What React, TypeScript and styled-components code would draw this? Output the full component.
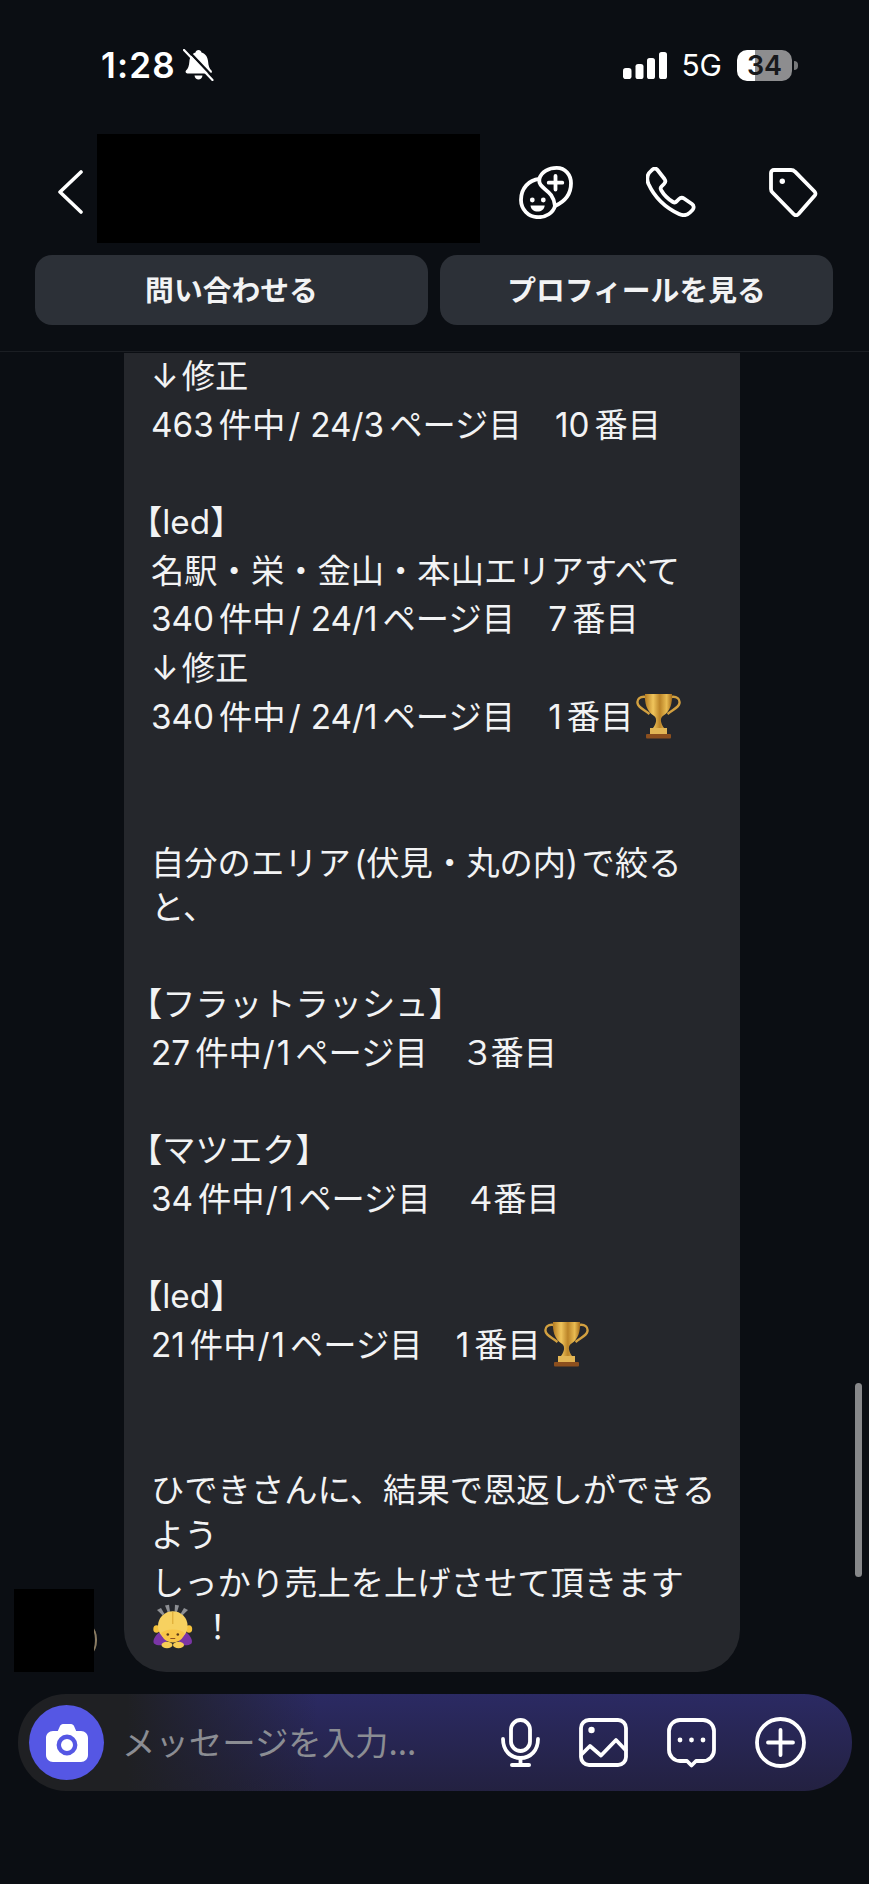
import React from "react";
import styled, { createGlobalStyle } from "styled-components";

const Global = createGlobalStyle`
  html, body { margin: 0; padding: 0; background: #0b0e13; }
  * { box-sizing: border-box; }
`;

const Page = styled.div`
  position: relative;
  width: 869px;
  height: 1884px;
  overflow: hidden;
  background: #0b0e13;
  color: #f2f3f4;
  font-family: Inter, "Noto Sans CJK JP", sans-serif;
`;

const StatusBar = styled.div`
  height: 134px;
  padding: 49px 72px 0 101px;
  display: flex;
  justify-content: space-between;
  align-items: flex-start;
`;
const StatusLeft = styled.div`
  display: flex;
  align-items: center;
  gap: 7px;
  height: 32px;
`;
const Time = styled.span`
  font-size: 35px;
  font-weight: 600;
  letter-spacing: 1.2px;
  line-height: 32px;
  color: #fff;
`;
const StatusRight = styled.div`
  display: flex;
  align-items: center;
  gap: 15px;
  height: 32px;
`;
const Network = styled.span`
  font-size: 30px;
  line-height: 32px;
  color: #fff;
  margin-left: -1px;
`;
const Battery = styled.div`
  position: relative;
  width: 55px;
  height: 31px;
  margin-right: 5px;
  border-radius: 10px;
  background: linear-gradient(90deg, #fff 0 18px, #8d8d8f 18px);
  color: #17181b;
  font-size: 27px;
  font-weight: 600;
  line-height: 31px;
  text-align: center;
  &::after {
    content: "";
    position: absolute;
    right: -6px;
    top: 11px;
    width: 4px;
    height: 9px;
    border-radius: 0 4px 4px 0;
    background: #77787a;
  }
`;

const Header = styled.div`
  height: 121px;
  padding: 0 51px 5px 57px;
  display: flex;
  align-items: center;
`;
const Redacted = styled.div`
  align-self: flex-start;
  width: 383px;
  height: 109px;
  margin-left: 14px;
  background: #000;
`;
const HeaderIcons = styled.div`
  margin-left: auto;
  display: flex;
  align-items: center;
  gap: 73px;
`;

const Actions = styled.div`
  display: grid;
  grid-template-columns: 393px 393px;
  gap: 12px;
  padding: 0 0 26px 35px;
  border-bottom: 1px solid #1b1e23;
`;
const ActionButton = styled.div`
  height: 70px;
  padding-bottom: 4px;
  border-radius: 17px;
  background: #2c3037;
  color: #f2f3f4;
  display: flex;
  align-items: center;
  justify-content: center;
  font-family: "Noto Sans CJK JP", sans-serif;
  font-size: 28.8px;
  font-weight: 700;
`;

const Chat = styled.div`
  height: 1320px;
  padding-left: 14px;
  display: flex;
  align-items: flex-end;
  overflow: hidden;
`;
const Avatar = styled.div`
  position: relative;
  flex: none;
  width: 80px;
  height: 83px;
  &::before {
    content: "";
    position: absolute;
    right: -3px;
    top: 30px;
    width: 20px;
    height: 42px;
    border-right: 2px solid #8b7c62;
    border-radius: 0 20px 20px 0;
  }
  &::after {
    content: "";
    position: absolute;
    inset: 0;
    background: #000;
  }
`;
const Bubble = styled.div`
  width: 616px;
  margin-left: 30px;
  padding: 0 0 20px 27px;
  background: #25272c;
  border-radius: 0 0 42px 42px;
  font-size: 33.3px;
  white-space: pre;
  & > :first-child {
    margin-top: -1px;
  }
`;
const Line = styled.div<{ $wrapped?: boolean; $bracket?: boolean }>`
  height: 48.65px;
  line-height: 48.65px;
  margin-top: ${(p) => (p.$wrapped ? "-4.5px" : "0")};
  margin-left: ${(p) => (p.$bracket ? "-22px" : "0")};
  color: #f2f3f4;
`;
const Blank = styled.div<{ $lines?: number }>`
  height: ${(p) => (p.$lines ?? 1) * 48.65}px;
`;
const Num = styled.span`
  margin-right: 0.15em;
`;
const Arrow = styled.span`
  margin-right: 3px;
`;
const Slash = styled.span<{ $compact?: boolean }>`
  margin: ${(p) => (p.$compact ? "0 2px 0 1px" : "0 10px 0 3px")};
`;
const TightSpaces = styled.span`
  word-spacing: -6px;
`;
const WideDigit = styled.span`
  letter-spacing: -4px;
`;
const EmojiBox = styled.svg<{ $gap?: number }>`
  display: inline-block;
  vertical-align: -10px;
  margin-left: 3px;
  margin-right: ${(p) => p.$gap ?? 0}px;
`;
const BowBox = styled(EmojiBox)`
  margin-left: 0;
`;

const Composer = styled.div`
  width: 834px;
  height: 97px;
  margin: 22px 0 0 18px;
  padding: 0 46px 0 11px;
  border-radius: 48px;
  display: flex;
  align-items: center;
  background:
    linear-gradient(90deg, #1f2023 0%, #1f2023 13%, rgba(31, 32, 35, 0) 36%),
    linear-gradient(180deg, #2b2a63 0%, #232141 100%);
`;
const CameraButton = styled.div`
  flex: none;
  width: 75px;
  height: 75px;
  border-radius: 50%;
  background: #5557e4;
  display: flex;
  align-items: center;
  justify-content: center;
`;
const Placeholder = styled.span`
  margin: 0 0 5px 18px;
  font-family: "Noto Sans CJK JP", sans-serif;
  font-size: 33.4px;
  font-weight: 400;
  color: #8b8d93;
`;
const ComposerIcons = styled.div`
  margin-left: auto;
  display: flex;
  align-items: center;
  gap: 39px;
`;

const ScrollThumb = styled.div`
  position: absolute;
  left: 855px;
  top: 1383px;
  width: 7px;
  height: 194px;
  border-radius: 4px;
  background: #87888a;
`;

const stroke = {
  fill: "none",
  stroke: "#fff",
  strokeWidth: 3.8,
  strokeLinecap: "round" as const,
  strokeLinejoin: "round" as const,
};

const BellSlash = () => (
  <svg width="31" height="32" viewBox="0 0 31 32">
    <path
      fill="#fff"
      d="M15.5 1c1.6 0 2.8 1 3 2.4 4 1.2 6.3 4.6 6.6 9 .3 4.600 1.300 7 3.400 9.200 1 1.100.3 2.900-1.300 2.900H4.300c-1.600 0-2.300-1.800-1.300-2.900 2.100-2.200 3.100-4.600 3.400-9.200.3-4.400 2.600-7.800 6.100-9 .2-1.400 1.400-2.400 3-2.400zM11.500 26.500h8c-.3 2.500-2 4-4 4s-3.700-1.500-4-4z"
    />
    <line x1="3.500" y1="0" x2="31" y2="29" stroke="#0b0e13" strokeWidth="2.400" />
    <line x1="1" y1="1" x2="29.500" y2="31" stroke="#fff" strokeWidth="2.200" strokeLinecap="round" />
  </svg>
);

const Signal = () => (
  <svg width="44" height="27" viewBox="0 0 44 27" fill="#fff">
    <rect x="0" y="16" width="8.500" height="11" rx="2.800" />
    <rect x="12.500" y="12" width="8" height="15" rx="2.600" />
    <rect x="24" y="6" width="8" height="21" rx="2.600" />
    <rect x="36" y="0" width="8" height="27" rx="2.600" />
  </svg>
);

const Chevron = () => (
  <svg width="26" height="46" viewBox="0 0 26 46">
    <path {...stroke} strokeWidth={3.6} d="M24 3 3 23l21 20" />
  </svg>
);

const Friends = () => (
  <svg width="54" height="53" viewBox="0 0 54 53">
    <path
      {...stroke}
      d="M20.300 13C22.500 5.500 30 1.900 37.700 1.900 46.500 1.900 52 9 52 17.300 52 29 45 36 36 40 34 47 27 51.200 19.300 51.200 9 51.200 2 43 2 34 2 22 10 14 20.300 13z"
    />
    <path {...stroke} d="M20.300 13C19 24 34 22 36 40" />
    <path {...stroke} d="M36.500 10v13.500M29.700 16.700h13.600" />
    <circle cx="13.300" cy="34" r="2.400" fill="#fff" />
    <circle cx="24.300" cy="34" r="2.400" fill="#fff" />
    <path fill="#fff" d="M11.500 39.500h14.200c-.5 4-3.500 6-7.100 6s-6.600-2-7.100-6z" />
  </svg>
);

const Phone = () => (
  <svg width="50" height="50" viewBox="0 0 50 50">
    <path
      {...stroke}
      d="M5.500 3.500C7.500 1 10 1 11.500 3l7 9c1.300 1.800 1 3.500-.5 5l-2.500 2.500c-1 1-1 2.500-.3 3.700C18 28 22 32 27 35c1.200.7 2.600.5 3.600-.6L33 32c1.500-1.500 3.300-1.700 5-.5l8 5.500c2 1.500 2.200 4 .5 6L44 45.500c-3 3-7 3.300-11 1.500C18 40 8.500 30 2.500 17c-1.700-4-1.500-8 .5-11z"
    />
  </svg>
);

const Tag = () => (
  <svg width="49" height="49" viewBox="0 0 49 49">
    <path
      {...stroke}
      d="M5 2h17c1.500 0 3 .6 4 1.700l19.500 19.800c1.300 1.300 1.300 3 0 4.300L29.500 46c-1.500 1.500-3.500 1.500-5 0l-21-21.500c-1-1-1.500-2.200-1.500-3.500V5c0-1.700 1.300-3 3-3z"
    />
    <circle cx="13.300" cy="13.300" r="2.700" fill="#fff" />
  </svg>
);

const Camera = () => (
  <svg width="42" height="38" viewBox="0 0 42 38">
    <path
      fill="#fff"
      d="M17 0h8c1.500 0 2.500 1 3 2l2.200 5H35c3.900 0 7 3 7 7v17c0 3.900-3.100 7-7 7H7c-3.900 0-7-3.100-7-7V14c0-4 3.100-7 7-7h4.800L14 2c.5-1 1.500-2 3-2z"
    />
    <circle cx="21" cy="21" r="8.200" fill="none" stroke="#5557e4" strokeWidth="4.400" />
  </svg>
);

const Mic = () => (
  <svg width="39" height="49" viewBox="0 0 39 49">
    <rect {...stroke} x="10" y="2" width="19" height="31" rx="9.500" />
    <path {...stroke} d="M2 21c0 11 7 19 17.500 19S37 32 37 21" />
    <path {...stroke} d="M19.500 40v6" />
    <path {...stroke} strokeWidth={4} d="M11 47h17" />
  </svg>
);

const Picture = () => (
  <svg width="49" height="49" viewBox="0 0 49 49">
    <rect {...stroke} x="2" y="2" width="45" height="45" rx="8" />
    <circle cx="12.500" cy="12" r="3.200" fill="#fff" />
    <path {...stroke} d="M3 36l8-8 11 9.500L37 22l9.500 10" />
  </svg>
);

const ChatDots = () => (
  <svg width="49" height="50" viewBox="0 0 49 50">
    <path
      {...stroke}
      d="M13 2h23c6 0 11 5 11 11v19c0 6-5 11-11 11h-7l-4.500 4.500L20 43h-7C7 43 2 38 2 32V13C2 7 7 2 13 2z"
    />
    <circle cx="13" cy="22" r="2.400" fill="#fff" />
    <circle cx="24.500" cy="22" r="2.400" fill="#fff" />
    <circle cx="36" cy="22" r="2.400" fill="#fff" />
  </svg>
);

const PlusCircle = () => (
  <svg width="51" height="51" viewBox="0 0 51 51">
    <circle {...stroke} cx="25.500" cy="25.500" r="23.500" />
    <path {...stroke} d="M25.500 13v25M13 25.500h25" />
  </svg>
);

const Trophy = ({ id }: { id: string }) => (
  <EmojiBox width="45" height="46" viewBox="0 0 45 46">
    <defs>
      <linearGradient id={id} x1="0" x2="1" y1="0" y2="0">
        <stop offset="0" stopColor="#b37a20" />
        <stop offset="0.3" stopColor="#f0c55c" />
        <stop offset="0.55" stopColor="#bb8428" />
        <stop offset="0.8" stopColor="#e9bc52" />
        <stop offset="1" stopColor="#a56c1a" />
      </linearGradient>
    </defs>
    <path
      fill="none"
      stroke="#d2a040"
      strokeWidth="2.400"
      d="M10 4C4 3 1 6 1.500 10c.6 4.500 5.500 6 12 11M35 4c6-1 9 2 8.500 6-.6 4.500-5.500 6-12 11"
    />
    <path
      fill={`url(#${id})`}
      d="M9 1h27c.5 9-1.500 17-8.500 21.500-2.500 1.600-2.800 4-2.500 6 .3 2 1.500 4.500 3 6.500H17c1.500-2 2.700-4.500 3-6.500.3-2 0-4.400-2.500-6C10.500 18 8.500 10 9 1z"
    />
    <rect x="14" y="35" width="17" height="6" fill="#e3b655" />
    <rect x="10" y="41" width="25" height="4.500" rx="1" fill="#8c4f1e" />
  </EmojiBox>
);

const Bowing = () => (
  <BowBox $gap={6} width="44" height="46" viewBox="0 0 44 46">
    <g fill="#8e9094">
      <path d="M6 7l4-2 3.500 6-2 1.300z" />
      <path d="M14 2.500l4-.7 1 7-2.400.3z" />
      <path d="M24 1.800l4 .7-2 6.600-2.400-.3z" />
      <path d="M33 5l4 2-5.500 5.300-2-1.300z" />
    </g>
    <ellipse cx="5.500" cy="26" rx="3.200" ry="3.800" fill="#f5c33c" />
    <ellipse cx="38" cy="26" rx="3.200" ry="3.800" fill="#f5c33c" />
    <path
      fill="#7b35a6"
      d="M9 29c3-1.500 6 .5 8 4l-2 8.500c-4 1.500-10 1-12-1-2-3 2-9.500 6-11.500zM34.500 29c-3-1.500-6 .5-8 4l2 8.500c4 1.500 10 1 12-1 2-3-2-9.500-6-11.500z"
    />
    <circle cx="21.800" cy="23" r="14.800" fill="#f7d160" />
    <path d="M21.800 9v12" stroke="#d9a52f" strokeWidth="1" />
    <path fill="#f8c548" d="M10 30c3-2.500 6.500-3.500 11.800-3.500s8.800 1 11.800 3.500c-1.500 6-6 9.500-11.800 9.500S11.500 36 10 30z" />
    <circle cx="16.800" cy="31.500" r="1.300" fill="#5a3a1a" />
    <circle cx="26.800" cy="31.500" r="1.300" fill="#5a3a1a" />
    <path d="M19.800 35.500h4" stroke="#8c5020" strokeWidth="1.200" strokeLinecap="round" />
    <ellipse cx="16" cy="42" rx="5.500" ry="3.300" fill="#f7cd55" />
    <ellipse cx="27.500" cy="42" rx="5.500" ry="3.300" fill="#f7cd55" />
  </BowBox>
);

export default function App() {
  return (
    <Page>
      <Global />
      <StatusBar>
        <StatusLeft>
          <Time>1:28</Time>
          <BellSlash />
        </StatusLeft>
        <StatusRight>
          <Signal />
          <Network>5G</Network>
          <Battery>34</Battery>
        </StatusRight>
      </StatusBar>

      <Header>
        <Chevron />
        <Redacted />
        <HeaderIcons>
          <Friends />
          <Phone />
          <Tag />
        </HeaderIcons>
      </Header>

      <Actions>
        <ActionButton>問い合わせる</ActionButton>
        <ActionButton>プロフィールを見る</ActionButton>
      </Actions>

      <Chat>
        <Avatar />
        <Bubble>
          <Line><Arrow>↓</Arrow>修正</Line>
          <Line><Num>463</Num>件中<Slash>/</Slash><Num>24/3</Num>ページ目　<Num>10</Num>番目</Line>
          <Blank />
          <Line $bracket>【led】</Line>
          <Line>名駅・栄・金山・本山エリアすべて</Line>
          <Line><Num>340</Num>件中<Slash>/</Slash><Num>24/1</Num>ページ目　<Num>7</Num>番目</Line>
          <Line><Arrow>↓</Arrow>修正</Line>
          <Line><Num>340</Num>件中<Slash>/</Slash><Num>24/1</Num>ページ目　<Num>1</Num>番目<Trophy id="cup-a" /></Line>
          <Blank $lines={2} />
          <Line><TightSpaces>自分のエリア (伏見・丸の内) で絞る</TightSpaces></Line>
          <Line $wrapped>と、</Line>
          <Blank />
          <Line $bracket>【フラットラッシュ】</Line>
          <Line><Num>27</Num>件中<Slash $compact>/</Slash><Num>1</Num>ページ目　<WideDigit>３</WideDigit>番目</Line>
          <Blank />
          <Line $bracket>【マツエク】</Line>
          <Line><Num>34</Num>件中<Slash $compact>/</Slash><Num>1</Num>ページ目　<WideDigit>４</WideDigit>番目</Line>
          <Blank />
          <Line $bracket>【led】</Line>
          <Line><Num>21</Num>件中<Slash $compact>/</Slash><Num>1</Num>ページ目　<Num>1</Num>番目<Trophy id="cup-b" /></Line>
          <Blank $lines={2} />
          <Line>ひできさんに、結果で恩返しができる</Line>
          <Line $wrapped>よう</Line>
          <Line>しっかり売上を上げさせて頂きます</Line>
          <Line $wrapped><Bowing />！</Line>
        </Bubble>
      </Chat>

      <Composer>
        <CameraButton>
          <Camera />
        </CameraButton>
        <Placeholder>メッセージを入力...</Placeholder>
        <ComposerIcons>
          <Mic />
          <Picture />
          <ChatDots />
          <PlusCircle />
        </ComposerIcons>
      </Composer>

      <ScrollThumb />
    </Page>
  );
}
